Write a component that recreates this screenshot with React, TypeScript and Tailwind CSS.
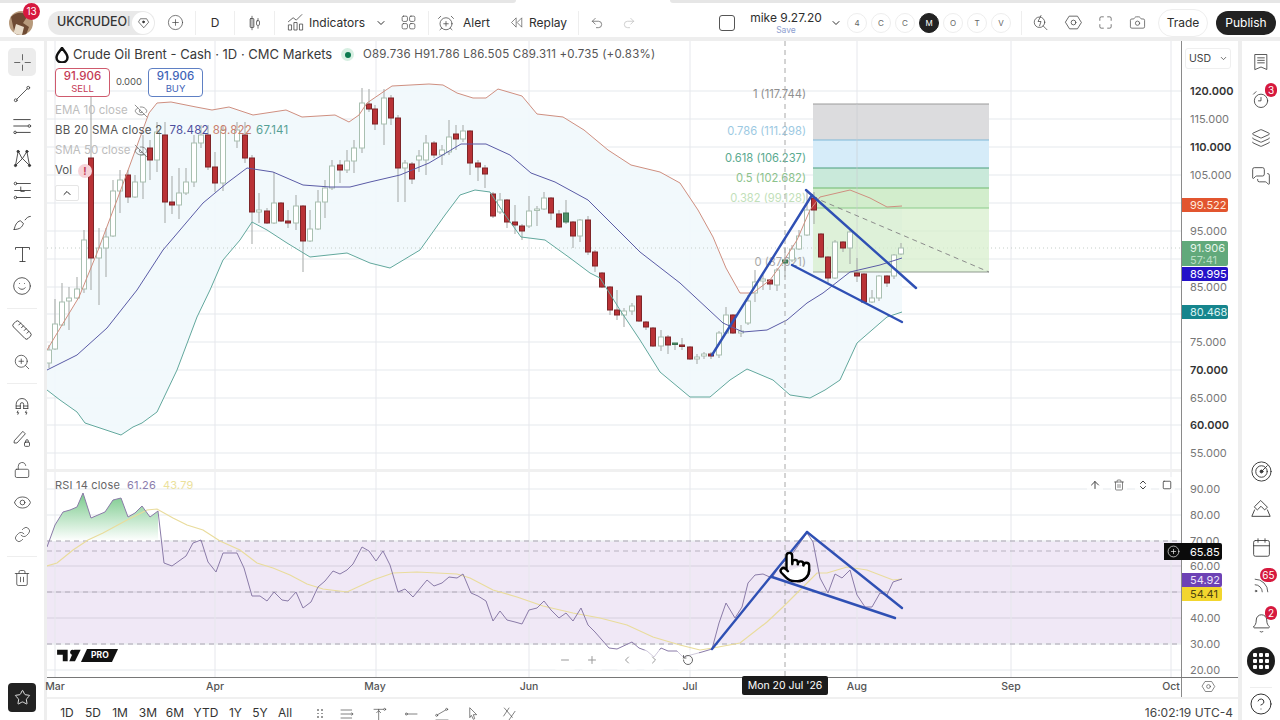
import type { ReactNode } from "react"
import {
  AlarmClockPlus, Bell, Calendar, Camera, ChevronDown, ChevronLeft, ChevronRight, ChevronUp, ChevronsUpDown, CircleHelp, CirclePlus, EyeOff,
  Eye, Layers, Link, LockOpen, MessagesSquare, Minus, Plus, Pointer, Redo2, RotateCcw, Rss, Ruler, Smile, Star, Trash2, Undo2, ArrowUp, Square, ZoomIn,
} from "lucide-react"

type Pt = [number, number]
const line = (pts: Pt[]) => "M" + pts.map((p) => p.join(",")).join("L")

const upper: Pt[] = [[47,350],[62,325],[79,297],[97,253],[117,200],[127,173],[138,143],[149,113],[157,103],[171,102],[196,107],[212,110],[229,107],[253,115],[286,110],[302,117],[335,115],[349,122],[359,115],[367,103],[386,90],[392,86],[429,84],[443,85],[457,93],[473,98],[486,98],[498,89],[522,96],[537,114],[563,117],[584,130],[608,150],[631,165],[660,172],[680,183],[698,210],[713,237],[726,268],[740,293],[753,293],[770,280],[783,262],[797,240],[810,210],[820,197],[850,190],[870,198],[887,207],[902,206]]
const mid: Pt[] = [[47,370],[77,355],[107,328],[137,290],[163,250],[203,203],[227,183],[247,168],[273,172],[303,185],[330,187],[350,187],[370,182],[400,175],[429,163],[461,144],[486,144],[510,155],[531,173],[555,182],[588,200],[610,222],[640,252],[680,283],[723,323],[743,332],[767,330],[787,320],[807,303],[823,293],[850,272],[880,265],[902,258]]
const lower: Pt[] = [[47,390],[60,400],[77,412],[85,423],[103,429],[121,435],[133,427],[142,423],[157,412],[177,370],[197,317],[210,290],[223,260],[240,240],[252,222],[267,230],[287,243],[310,257],[347,253],[370,263],[390,268],[420,250],[445,215],[460,195],[475,190],[490,192],[503,212],[521,237],[545,240],[570,258],[590,273],[600,278],[620,310],[640,340],[660,372],[690,397],[710,397],[730,380],[747,369],[773,380],[790,395],[810,398],[825,390],[840,380],[857,343],[887,317],[902,312]]

const rsi: Pt[] = [[47,547],[55,525],[63,512],[70,510],[77,507],[83,493],[91,518],[105,512],[113,500],[121,498],[128,517],[135,513],[142,506],[150,517],[158,511],[164,563],[172,566],[186,556],[193,543],[201,540],[208,562],[216,572],[223,553],[237,553],[244,568],[252,596],[260,596],[267,601],[274,592],[282,600],[288,601],[296,592],[303,608],[311,602],[318,587],[325,581],[333,571],[340,574],[347,570],[353,564],[362,547],[369,551],[376,561],[383,551],[390,565],[398,592],[405,589],[413,597],[427,580],[434,586],[442,583],[449,577],[457,578],[463,574],[471,593],[478,596],[486,601],[493,621],[500,611],[507,620],[515,622],[522,624],[529,610],[537,608],[544,601],[551,610],[559,618],[566,613],[573,621],[581,608],[588,625],[595,632],[609,648],[617,649],[632,642],[639,648],[647,651],[654,657],[661,648],[668,651],[677,651],[683,657],[702,652],[712,649],[719,623],[726,603],[735,618],[742,607],[748,583],[755,575],[763,574],[772,578],[780,565],[790,557],[807,533],[813,542],[820,578],[828,593],[835,574],[842,578],[850,570],[857,595],[865,607],[872,607],[880,593],[887,595],[893,582],[902,579]]
const rsiMa: Pt[] = [[47,566],[57,563],[73,550],[88,540],[103,533],[127,520],[147,510],[157,509],[173,518],[187,525],[203,530],[220,541],[240,550],[257,563],[273,568],[290,575],[307,584],[323,589],[347,592],[373,580],[393,573],[417,572],[457,574],[470,578],[493,590],[517,597],[543,606],[573,613],[600,618],[627,625],[653,637],[680,645],[700,650],[713,648],[740,643],[767,622],[783,607],[800,590],[817,573],[827,573],[847,567],[867,570],[893,580],[902,579]]
const rsiAbove: Pt[] = rsi.slice(0, 15)

// x, body top, body bottom, wick high, wick low, kind
type Candle = [number, number, number, number, number, "h" | "r" | "g"]
const candles: Candle[] = [
  [49,350,363,345,368,"h"],[55,324,349,299,350,"h"],[62,302,325,283,326,"h"],[69,298,301,287,330,"h"],[77,289,298,277,299,"h"],[84,240,289,230,293,"h"],[91,158,258,95,290,"r"],[99,248,258,228,305,"h"],[106,237,248,228,277,"h"],[113,191,236,180,237,"h"],[120,180,191,170,213,"h"],[128,175,197,170,203,"r"],[135,182,197,175,198,"h"],[143,155,182,135,199,"h"],[150,148,160,140,180,"r"],[157,132,160,122,172,"h"],[165,135,202,122,223,"r"],[172,202,205,176,214,"r"],[179,193,205,168,219,"h"],[186,182,193,168,195,"h"],[194,143,182,135,187,"h"],[201,135,143,125,148,"h"],[208,135,167,125,170,"r"],[215,167,183,152,192,"r"],[223,130,183,125,191,"h"],[237,130,141,122,148,"h"],[245,135,158,122,163,"r"],[252,158,212,155,244,"r"],[259,210,212,193,223,"h"],[267,211,223,208,224,"r"],[274,203,223,172,224,"h"],[281,203,221,202,222,"r"],[288,221,223,210,228,"r"],[296,206,223,195,230,"h"],[303,206,241,205,272,"r"],[310,229,241,210,242,"h"],[318,202,229,190,230,"h"],[325,188,202,180,218,"h"],[332,166,188,160,190,"h"],[340,165,170,160,183,"r"],[347,161,170,150,173,"h"],[354,148,161,140,173,"h"],[362,103,148,88,153,"h"],[369,104,109,89,112,"r"],[375,109,124,105,130,"r"],[384,98,124,89,145,"h"],[391,98,118,95,125,"r"],[398,118,168,115,202,"r"],[405,163,168,160,202,"h"],[412,164,179,162,184,"r"],[419,156,160,150,172,"h"],[426,143,160,135,175,"h"],[434,143,155,141,158,"r"],[442,150,155,145,165,"h"],[449,137,152,120,155,"h"],[456,134,139,125,150,"r"],[463,131,139,125,142,"h"],[470,131,163,130,175,"r"],[478,163,167,160,181,"r"],[485,168,174,165,188,"r"],
  [493,194,216,192,218,"r"],[500,200,212,193,214,"h"],[507,200,222,199,228,"r"],[515,222,225,205,234,"r"],[522,226,231,224,240,"r"],[529,211,226,196,228,"h"],[537,209,210,206,226,"h"],[544,198,209,192,210,"h"],[551,198,213,197,220,"r"],[559,214,227,210,228,"r"],[566,213,222,200,224,"g"],[573,222,236,221,248,"r"],[580,220,236,219,242,"h"],[588,220,252,216,255,"r"],[595,252,266,250,272,"r"],[602,273,287,272,288,"r"],[610,287,310,286,315,"r"],[617,310,315,290,320,"r"],[624,311,315,308,327,"h"],[632,306,311,303,315,"h"],[639,296,321,295,322,"r"],[646,322,327,321,330,"r"],[653,328,346,327,347,"r"],[661,337,346,330,351,"h"],[668,337,345,335,354,"r"],[675,343,344,343,350,"g"],[682,345,346,338,350,"r"],[690,347,359,346,360,"r"],[697,357,359,354,364,"h"],[704,354,356,352,359,"h"],[711,354,356,352,359,"r"],
  [719,333,355,331,358,"h"],[726,315,333,307,334,"h"],[733,315,333,314,334,"r"],[741,331,333,325,337,"h"],[748,301,323,295,325,"h"],[755,282,293,270,302,"h"],[763,279,281,275,290,"h"],[770,280,284,279,290,"r"],[777,270,285,268,291,"h"],[785,260,263,247,277,"g"],[792,249,260,245,262,"h"],[799,236,249,230,250,"h"],[807,210,235,190,236,"h"],[814,198,210,192,224,"r"],[821,234,257,233,258,"r"],[828,257,278,256,283,"r"],[835,242,278,240,279,"h"],[843,242,248,241,252,"r"],[850,232,248,230,264,"h"],[857,273,276,258,282,"r"],[864,274,302,273,303,"r"],[872,298,302,290,303,"h"],[879,276,298,275,301,"h"],[887,276,283,275,287,"r"],[894,255,276,254,279,"h"],[901,248,254,243,255,"h"],
]

const vGrid = [55, 215, 376, 529, 690, 857, 1011, 1171]
const hGrid = [91, 119, 147, 175, 203, 231, 259, 287, 314, 342, 370, 398, 425, 453, 489, 515, 541, 566, 592, 618, 644, 670]

const priceTicks: [string, number, boolean][] = [["120.000",91,true],["115.000",119,false],["110.000",147,true],["105.000",175,false],["95.000",231,false],["85.000",287,false],["75.000",342,false],["70.000",370,true],["65.000",398,false],["60.000",425,true],["55.000",453,false],["90.00",489,false],["80.00",515,false],["70.00",541,false],["60.00",566,false],["40.00",618,false],["30.00",644,false],["20.00",670,false]]
const months: [string, number][] = [["Mar",55],["Apr",215],["May",375],["Jun",529],["Jul",690],["Aug",857],["Sep",1011],["Oct",1171]]
const ranges: [string, string][] = [["1D","w-[26px]"],["5D","w-[26px]"],["1M","w-[28px]"],["3M","w-[28px]"],["6M","w-[26px]"],["YTD","w-[36px]"],["1Y","w-[23px]"],["5Y","w-[26px]"],["All","w-[24px]"]]
const fibLabels: [string, number, string][] = [["1 (117.744)",98,"#8f8f8f"],["0.786 (111.298)",135,"#9cc9e2"],["0.618 (106.237)",162,"#5aa98f"],["0.5 (102.682)",182,"#8cc28c"],["0.382 (99.128)",202,"#c2dfba"],["0 (87.621)",266,"#a8a8a8"]]

function Ico({ size = 22, children, className = "" }: { size?: number; children: ReactNode; className?: string }) {
  return (
    <svg width={size} height={size} viewBox="0 0 24 24" fill="none" stroke="currentColor" strokeWidth={1} strokeLinecap="round" strokeLinejoin="round" className={className}>
      {children}
    </svg>
  )
}

function ToolCell({ children }: { children: ReactNode }) {
  return <div className="h-[32px] w-[44px] flex items-center justify-center text-[#3a3a3a]">{children}</div>
}

function SideCell({ children, badge, wide }: { children: ReactNode; badge?: string; wide?: boolean }) {
  return (
    <div className="relative h-[38px] w-[38px] flex items-center justify-center text-[#3a3a3a]">
      {children}
      {badge && (
        <span className={`absolute top-[2px] right-[3px] h-[14px] rounded-full bg-[#d6193e] text-white text-[10px] leading-[14px] text-center ${wide ? "w-[17px]" : "w-[12px]"}`}>
          {badge}
        </span>
      )}
    </div>
  )
}

function Divider() {
  return <div className="w-px h-[24px] bg-[#eeeeee] shrink-0" />
}

function TopBar() {
  const letters = ["4", "C", "C", "M", "O", "T", "V"]
  return (
    <div className="h-[38px] flex items-center pt-[1px] text-[#2e2e2e] text-[12px]">
      <div className="relative ml-[9px] w-[24px] h-[24px] shrink-0">
        <svg width="24" height="24" viewBox="0 0 24 24" className="rounded-full">
          <rect width="24" height="24" fill="#b79a7c" />
          <path d="M2 6c6-6 14-5 16 0l-4 6 6 4-3 8H6z" fill="#6e4a33" />
          <path d="M7 13l8 3-2 8H4z" fill="#e8dccb" />
        </svg>
        <span className="absolute -top-[8px] left-[14px] w-[17px] h-[17px] rounded-full bg-[#d6193e] text-white text-[10px] leading-[17px] text-center">13</span>
      </div>
      <div className="ml-[15px] w-[107px] h-[24px] rounded-full bg-[#e9e9e9] flex items-center shrink-0 relative">
        <span className="pl-[9px] font-medium text-[12.5px] text-[#333] whitespace-nowrap">UKCRUDEO<span className="text-[#aaa]">I</span></span>
        <span className="absolute right-[1px] top-[1px] w-[22px] h-[22px] rounded-full bg-white flex items-center justify-center">
          <Ico size={15}>
            <path d="M12 20L4 11l3-5h10l3 5z" />
            <circle cx="12" cy="11" r="1.6" fill="currentColor" />
          </Ico>
        </span>
      </div>
      <div className="w-[40px] flex justify-center shrink-0 text-[#444]"><CirclePlus size={17} strokeWidth={1} /></div>
      <Divider />
      <div className="w-[38px] text-center shrink-0 text-[12px]">D</div>
      <Divider />
      <div className="w-[39px] flex justify-center shrink-0 text-[#444]">
        <Ico size={18}>
          <path d="M8 3v18M16 6v13" />
          <rect x="5.5" y="6" width="5" height="12" rx="1" fill="#bbb" />
          <rect x="14" y="9" width="4" height="6" rx="1" fill="#fff" />
        </Ico>
      </div>
      <Divider />
      <div className="ml-[6px] w-[28px] flex justify-center shrink-0 text-[#444]">
        <Ico size={19}>
          <path d="M3 21v-6h4v6zM10 21v-9h4v9zM17 21v-7h4v7z" />
          <path d="M3 11l6-5 4 3 7-7" />
        </Ico>
      </div>
      <div className="w-[60px] shrink-0">Indicators</div>
      <div className="w-[24px] flex justify-center shrink-0"><ChevronDown size={12} /></div>
      <div className="w-[30px] flex justify-center shrink-0 text-[#444]">
        <Ico size={17}>
          <rect x="3" y="3" width="7.5" height="7.5" rx="2" />
          <rect x="13.5" y="3" width="7.5" height="7.5" rx="2" />
          <rect x="3" y="13.5" width="7.5" height="7.5" rx="2" />
          <rect x="13.5" y="13.5" width="7.5" height="7.5" rx="2" />
        </Ico>
      </div>
      <div className="ml-[5px]"><Divider /></div>
      <div className="w-[34px] flex justify-center shrink-0 text-[#444]"><AlarmClockPlus size={18} strokeWidth={1} /></div>
      <div className="w-[40px] shrink-0">Alert</div>
      <div className="w-[26px] flex justify-center shrink-0 text-[#444]">
        <Ico size={15}>
          <path d="M11 5l-7 7 7 7zM20 5l-7 7 7 7z" />
        </Ico>
      </div>
      <div className="w-[49px] shrink-0">Replay</div>
      <Divider />
      <div className="ml-[4px] w-[28px] flex justify-center shrink-0 text-[#555]"><Undo2 size={14} strokeWidth={1.2} /></div>
      <div className="ml-[4px] w-[28px] flex justify-center shrink-0 text-[#bbb]"><Redo2 size={14} strokeWidth={1.2} /></div>
      <div className="w-[75px] shrink-0" />
      <div className="w-[18px] flex justify-center shrink-0">
        <div className="w-[16px] h-[16px] rounded-[3px] border border-[#555]" />
      </div>
      <div className="ml-[12px] w-[76px] shrink-0 flex flex-col items-center">
        <span className="text-[12px] leading-[14px] mt-[1px] whitespace-nowrap">mike 9.27.20</span>
        <span className="text-[8.5px] leading-[10px] text-[#8ea0d0]">Save</span>
      </div>
      <div className="w-[23px] flex justify-center shrink-0"><ChevronDown size={12} /></div>
      <div className="flex gap-[4px] shrink-0">
        {letters.map((l, i) => (
          <div
            key={i}
            className={`w-[20px] h-[20px] rounded-full flex items-center justify-center text-[8px] border ${l === "M" ? "bg-[#222] text-white border-[#222]" : "border-[#eeeeee] text-[#666]"}`}
          >
            {l}
          </div>
        ))}
      </div>
      <div className="ml-[10px]"><Divider /></div>
      <div className="ml-[3px] w-[32px] flex justify-center shrink-0 text-[#444]">
        <Ico size={18}>
          <circle cx="10" cy="11" r="7" />
          <path d="M15 16l5 5" />
          <path d="M12 2l-4 8h4l-2 6" />
        </Ico>
      </div>
      <div className="w-[32px] flex justify-center shrink-0 text-[#444]">
        <Ico size={19}>
          <path d="M7 4h10l5 8-5 8H7l-5-8z" />
          <circle cx="12" cy="12" r="3" />
        </Ico>
      </div>
      <div className="w-[32px] flex justify-center shrink-0 text-[#444]">
        <Ico size={17}>
          <path d="M4 9V6a2 2 0 0 1 2-2h3M15 4h3a2 2 0 0 1 2 2v3M20 15v3a2 2 0 0 1-2 2h-3M9 20H6a2 2 0 0 1-2-2v-3" />
        </Ico>
      </div>
      <div className="w-[32px] flex justify-center shrink-0 text-[#444]"><Camera size={17} strokeWidth={1} /></div>
      <div className="ml-[5px] w-[50px] h-[28px] rounded-full border border-[#eeeeee] flex items-center justify-center shrink-0">Trade</div>
      <div className="ml-[8px] w-[60px] h-[24px] rounded-full bg-[#222] text-white flex items-center justify-center shrink-0">Publish</div>
    </div>
  )
}

function LeftBar() {
  return (
    <div className="w-[47px] shrink-0 border-r-[3px] border-[#eeeeee] flex flex-col pt-[5px] bg-white">
      <div className="h-[32px] w-[44px] flex items-center justify-center text-[#555]">
        <div className="w-[28px] h-[28px] rounded-[5px] bg-[#ececec] flex items-center justify-center">
          <Ico size={21}><path d="M12 3v6M12 15v6M3 12h6M15 12h6" /></Ico>
        </div>
      </div>
      <ToolCell><Ico size={20}><circle cx="4.5" cy="19.5" r="1.7" /><circle cx="19.5" cy="4.5" r="1.7" /><path d="M6 18L18 6" /></Ico></ToolCell>
      <ToolCell><Ico size={22}><path d="M3 5h18M3 12h15M7 19h14" /><circle cx="20" cy="12" r="1.4" /><circle cx="4.5" cy="19" r="1.4" /></Ico></ToolCell>
      <ToolCell><Ico size={21}><path d="M7 4L4 20l8-8 8 8-3-16-5 8z" /><circle cx="7" cy="4" r="1.3" fill="currentColor" /><circle cx="17" cy="4" r="1.3" fill="currentColor" /><circle cx="4" cy="20" r="1.3" fill="currentColor" /><circle cx="20" cy="20" r="1.3" fill="currentColor" /></Ico></ToolCell>
      <ToolCell><Ico size={21}><path d="M6 4h15M6 20h15M3 12h18M10 8v5h4" /><circle cx="4" cy="4" r="1.5" /><circle cx="4" cy="20" r="1.5" /></Ico></ToolCell>
      <ToolCell><Ico size={21}><path d="M2.5 20c1-5 3-9 7-10l3.5 3c-1 4-4 7-10.5 7z" /><path d="M15 9c1.5-2 3.5-4 6-4" /></Ico></ToolCell>
      <ToolCell><Ico size={21}><path d="M4 6V4h16v2M12 4v16M9 20h6" /></Ico></ToolCell>
      <ToolCell><Smile size={20} strokeWidth={1} /></ToolCell>
      <div className="mt-[6px] mb-[5px] mx-auto w-[30px] h-px bg-[#eeeeee]" />
      <ToolCell><Ruler size={22} strokeWidth={1} /></ToolCell>
      <ToolCell><ZoomIn size={18} strokeWidth={1} /></ToolCell>
      <div className="mt-[5px] mb-[6px] mx-auto w-[30px] h-px bg-[#eeeeee]" />
      <ToolCell><Ico size={20}><path d="M5 15V10a7 7 0 0 1 14 0v5M10 15V10a2 2 0 0 1 4 0v5M5 12h5M14 12h5M5 15h5M14 15h5M7 18l-1 2 2 0-1 2M17 18l-1 2 2 0-1 2" /></Ico></ToolCell>
      <ToolCell><Ico size={20}><path d="M3 15L13 4l3 3L6 18l-3 0z" /><rect x="15" y="17" width="6" height="5" rx="1" /><path d="M16.5 17v-1.5a1.5 1.5 0 0 1 3 0V17" /></Ico></ToolCell>
      <ToolCell><LockOpen size={18} strokeWidth={1} /></ToolCell>
      <ToolCell><Eye size={19} strokeWidth={1} /></ToolCell>
      <ToolCell><Link size={17} strokeWidth={1} /></ToolCell>
      <div className="mt-[6px] mb-[5px] mx-auto w-[30px] h-px bg-[#eeeeee]" />
      <ToolCell><Trash2 size={18} strokeWidth={1} /></ToolCell>
      <div className="mt-auto mb-[8px] ml-[8px] w-[28px] h-[29px] rounded-[4px] bg-[#222] flex items-center justify-center text-white">
        <Star size={17} strokeWidth={1.2} />
      </div>
    </div>
  )
}

function RightBar() {
  return (
    <div className="w-[42px] shrink-0 border-l-[4px] border-[#eeeeee] flex flex-col pt-[2px] bg-white">
      <SideCell><Ico size={20}><path d="M5 3h14v18l-7-3-7 3z" /><path d="M8 7h8M8 10h8M8 13h8" /></Ico></SideCell>
      <SideCell badge="3"><Ico size={20}><circle cx="12" cy="13" r="8" /><path d="M12 9v4H9M3 5l3-3" /></Ico></SideCell>
      <SideCell><Layers size={20} strokeWidth={1} /></SideCell>
      <SideCell><MessagesSquare size={20} strokeWidth={1} /></SideCell>
      <div className="mt-auto" />
      <SideCell><Ico size={23}><circle cx="12" cy="12" r="10" /><circle cx="12" cy="12" r="6" /><circle cx="12" cy="12" r="1.5" fill="currentColor" /><path d="M12 12l6-6" /></Ico></SideCell>
      <SideCell><Ico size={22}><path d="M12 3l7 7-3 3-4-4-4 4-3-3zM5 13l-3 7h20l-3-7" /></Ico></SideCell>
      <SideCell><Calendar size={21} strokeWidth={1} /></SideCell>
      <SideCell badge="65" wide><Rss size={19} strokeWidth={1} /></SideCell>
      <SideCell badge="2"><Bell size={21} strokeWidth={1} /></SideCell>
      <SideCell>
        <div className="w-[28px] h-[28px] rounded-full bg-[#1c1c1c] grid grid-cols-3 gap-[2px] p-[6px]">
          {Array.from({ length: 9 }).map((_, i) => (
            <span key={i} className="bg-white rounded-[1px]" />
          ))}
        </div>
      </SideCell>
      <div className="mt-[7px] mx-auto w-[22px] h-px bg-[#eeeeee]" />
      <div className="h-[32px] w-[38px] flex items-center justify-center text-[#333]"><CircleHelp size={24} strokeWidth={1} /></div>
    </div>
  )
}

function ChartSvg() {
  const band = line(upper) + "L" + [...lower].reverse().map((p) => p.join(",")).join("L") + "Z"
  return (
    <svg viewBox="47 41 1134 636" width="1134" height="636" className="absolute inset-0">
      <defs>
        <linearGradient id="rsiGreen" x1="0" y1="493" x2="0" y2="541" gradientUnits="userSpaceOnUse">
          <stop offset="0" stopColor="#78c98a" />
          <stop offset="1" stopColor="#ffffff" />
        </linearGradient>
        <clipPath id="aboveBand"><rect x="47" y="470" width="120" height="71" /></clipPath>
      </defs>
      <rect x="47" y="541" width="1134" height="103" fill="#f0e8f6" />
      {hGrid.map((y) => <line key={y} x1="47" x2="1181" y1={y} y2={y} stroke={y > 541 && y < 644 ? "#dfd8e6" : "#eef0f3"} strokeWidth={1.5} />)}
      {vGrid.map((x) => <line key={x} x1={x} x2={x} y1="41" y2="677" stroke="#e6e7ec" />)}
      <rect x="47" y="469" width="1134" height="3" fill="#f0f0f0" />
      <path d={band} fill="#f1f9fc" fillOpacity="0.92" />
      <line x1="47" x2="1181" y1="248" y2="248" stroke="#c4cdc8" strokeDasharray="1 3" />

      <rect x="813" y="104" width="176" height="36" fill="#dcdcde" />
      <rect x="813" y="140" width="176" height="28" fill="#d6ecf9" />
      <rect x="813" y="168" width="176" height="20" fill="#c9e9da" />
      <rect x="813" y="188" width="176" height="20" fill="#d2edcc" />
      <rect x="813" y="208" width="176" height="64" fill="#d6eecb" fillOpacity="0.7" />
      <line x1="813" x2="989" y1="104" y2="104" stroke="#9a9a9a" />
      <line x1="813" x2="989" y1="140" y2="140" stroke="#7fb8d8" />
      <line x1="813" x2="989" y1="168" y2="168" stroke="#4a9e7a" />
      <line x1="813" x2="989" y1="188" y2="188" stroke="#6eb96e" />
      <line x1="813" x2="989" y1="208" y2="208" stroke="#8ccb8c" />
      <line x1="813" x2="989" y1="272" y2="272" stroke="#8f9a8f" />
      <line x1="857" x2="857" y1="104" y2="272" stroke="#c9ccd0" strokeOpacity="0.6" />
      <line x1="813" y1="197" x2="989" y2="272" stroke="#8c8c8c" strokeDasharray="5 4" />
      {fibLabels.map(([t, y, c]) => (
        <text key={t} x="806" y={y} textAnchor="end" fontSize="11.2" fill={c} fontFamily="Inter, sans-serif">{t}</text>
      ))}

      {candles.map(([x, top, bot, hi, lo, k], i) => (
        <g key={i}>
          <line x1={x} x2={x} y1={hi} y2={lo} stroke="#a3a7a5" />
          <rect
            x={x - 2.5}
            y={top}
            width="5"
            height={Math.max(bot - top, 1.5)}
            fill={k === "r" ? "#b93236" : k === "g" ? "#4f8f68" : "#ffffff"}
            stroke={k === "r" ? "#7f2528" : k === "g" ? "#3b7453" : "#a9c0b1"}
          />
        </g>
      ))}
      <path d={line(upper)} fill="none" stroke="#cf8f80" />
      <path d={line(mid)} fill="none" stroke="#5a5ba6" />
      <path d={line(lower)} fill="none" stroke="#62a89d" />

      <path d={line(rsiAbove) + "L158,541L47,541Z"} fill="url(#rsiGreen)" clipPath="url(#aboveBand)" />
      <line x1="47" x2="1181" y1="541" y2="541" stroke="#a8a2b0" strokeDasharray="5 4" />
      <line x1="47" x2="1181" y1="592" y2="592" stroke="#b0aab8" strokeDasharray="5 4" />
      <line x1="47" x2="1181" y1="644" y2="644" stroke="#a8a2b0" strokeDasharray="5 4" />
      <line x1="47" x2="1163" y1="551" y2="551" stroke="#b8b2c0" strokeDasharray="5 4" />
      <path d={line(rsiMa)} fill="none" stroke="#e9dc9c" strokeWidth={1.2} />
      <path d={line(rsi)} fill="none" stroke="#8a7ba8" />
      <line x1="785" x2="785" y1="41" y2="677" stroke="#a8a8a8" strokeDasharray="5 4" />

      <g stroke="#2f50b4" strokeWidth={2.4} strokeLinecap="round">
        <line x1="712" y1="355" x2="812" y2="195" />
        <line x1="806" y1="190" x2="916" y2="288" />
        <line x1="792" y1="265" x2="902" y2="322" />
        <line x1="712" y1="649" x2="807" y2="532" />
        <line x1="807" y1="532" x2="902" y2="608" />
        <line x1="772" y1="577" x2="895" y2="618" />
      </g>
    </svg>
  )
}

function Legend() {
  return (
    <>
      <div className="absolute left-[8px] top-[4px] flex items-center whitespace-nowrap">
        <svg width="14" height="16" viewBox="0 0 14 16" className="mr-[4px]">
          <path d="M7 1C5 4 1.500 7 1.500 10.500a5.500 5 0 0 0 11 0C12.500 7 9 4 7 1z" fill="none" stroke="#111" strokeWidth="2.500" />
        </svg>
        <span className="text-[13px] text-[#3a3a3a] w-[268px]">Crude Oil Brent - Cash · 1D · CMC Markets</span>
        <span className="w-[13px] h-[13px] rounded-full bg-[#d7efe2] flex items-center justify-center mr-[9px]">
          <span className="w-[6px] h-[6px] rounded-full bg-[#0c7a4f]" />
        </span>
        <span className="text-[11.5px] text-[#555] tracking-[0.2px]">O89.736 H91.786 L86.505 C89.311 +0.735 (+0.83%)</span>
      </div>

      <div className="absolute left-[8px] top-[27px] flex items-center">
        <div className="w-[55px] h-[29px] rounded-[4px] border border-[#cf5a6d] bg-white flex flex-col items-center justify-center text-[#c43a55] leading-none">
          <span className="text-[11.5px] font-medium leading-[13px]">91.906</span>
          <span className="text-[9.5px] leading-[12px]">SELL</span>
        </div>
        <span className="w-[38px] text-center text-[9.5px] text-[#555]">0.000</span>
        <div className="w-[55px] h-[29px] rounded-[4px] border border-[#5f80c4] bg-white flex flex-col items-center justify-center text-[#3f64b8] leading-none">
          <span className="text-[11.5px] font-medium leading-[13px]">91.906</span>
          <span className="text-[9.5px] leading-[12px]">BUY</span>
        </div>
      </div>

      <div className="absolute left-[8px] top-[62px] flex items-center h-[16px] text-[11.5px] text-[#bdbdbd] whitespace-nowrap">
        <span className="w-[79px]">EMA 10 close</span>
        <EyeOff size={14} strokeWidth={1.2} className="text-[#666]" />
      </div>
      <div className="absolute left-[8px] top-[82px] flex items-center gap-[4px] h-[16px] text-[11.5px] tracking-[0.2px] whitespace-nowrap">
        <span className="text-[#555] mr-[3px]">BB 20 SMA close 2</span>
        <span className="text-[#4e4f9e]">78.482</span>
        <span className="text-[#c9806e]">89.822</span>
        <span className="text-[#56a095]">67.141</span>
      </div>
      <div className="absolute left-[8px] top-[102px] flex items-center h-[16px] text-[11.5px] text-[#bdbdbd] whitespace-nowrap">
        <span className="w-[79px]">SMA 50 close</span>
        <EyeOff size={14} strokeWidth={1.2} className="text-[#666]" />
      </div>
      <div className="absolute left-[8px] top-[122px] flex items-center h-[16px] text-[11.5px] text-[#555]">
        <span className="w-[23px]">Vol</span>
        <span className="w-[14px] h-[14px] rounded-full bg-[#f6d3d8] text-[#c43a55] text-[10px] font-bold flex items-center justify-center">!</span>
      </div>
      <div className="absolute left-[8px] top-[144px] w-[24px] h-[16px] rounded-[2px] border border-[#e6e6e6] bg-white flex items-center justify-center">
        <ChevronUp size={12} className="text-[#222]" />
      </div>

      <div className="absolute left-[8px] top-[436px] flex gap-[7px] text-[11px] tracking-[0.2px] whitespace-nowrap">
        <span className="text-[#666]">RSI 14 close</span>
        <span className="text-[#8a7cac]">61.26</span>
        <span className="text-[#ebe19c]">43.79</span>
      </div>

      <div className="absolute right-[6px] top-[436px] flex gap-[8px] text-[#444]">
        <div className="w-[16px] h-[16px] flex items-center justify-center bg-white/80"><ArrowUp size={12} /></div>
        <div className="w-[16px] h-[16px] flex items-center justify-center bg-white/80"><Trash2 size={12} strokeWidth={1.3} /></div>
        <div className="w-[16px] h-[16px] flex items-center justify-center bg-white/80"><ChevronsUpDown size={12} className="rotate-180" /></div>
        <div className="w-[16px] h-[16px] flex items-center justify-center bg-white/80"><Square size={10} /></div>
      </div>

      <div className="absolute left-[10px] top-[608px] flex items-center">
        <svg width="27" height="13" viewBox="0 0 33 16">
          <path d="M0 1h13v14H7V7H0zM22 15h-7l6-14h8zM19 1a3 3 0 1 1-.01 0z" fill="#111" />
        </svg>
        <div className="w-[31px] h-[13px] bg-[#111] -skew-x-[25deg] flex items-center justify-center">
          <span className="skew-x-[25deg] text-white text-[8.5px] font-bold leading-none">PRO</span>
        </div>
      </div>

      <div className="absolute left-[507px] top-[609px] flex text-[#999]">
        <div className="w-[22px] h-[20px] rounded-[3px] bg-white/60 flex items-center justify-center mr-[5px]"><Minus size={12} /></div>
        <div className="w-[22px] h-[20px] rounded-[3px] bg-white/60 flex items-center justify-center mr-[13px]"><Plus size={12} /></div>
        <div className="w-[22px] h-[20px] rounded-[3px] bg-white/60 flex items-center justify-center mr-[5px]"><ChevronLeft size={12} /></div>
        <div className="w-[22px] h-[20px] rounded-[3px] bg-white/60 flex items-center justify-center mr-[12px]"><ChevronRight size={12} /></div>
        <div className="w-[22px] h-[20px] rounded-[3px] bg-white/60 flex items-center justify-center text-[#666]"><RotateCcw size={12} /></div>
      </div>

      <div className="absolute left-[731px] top-[509px]">
        <Pointer size={34} strokeWidth={1.7} fill="#ffffff" className="text-black" />
      </div>
    </>
  )
}

function PriceAxis() {
  return (
    <div className="relative w-[57px] h-[636px] border-l border-[#8a8a8a] shrink-0 text-[11px]">
      <div className="absolute left-[3px] top-[7px] w-[46px] h-[21px] rounded-[3px] border border-[#efefef] flex items-center justify-between pl-[3px] pr-[2px] text-[10.5px] text-[#444]">
        USD
        <ChevronDown size={9} />
      </div>
      {priceTicks.map(([t, y, bold]) => (
        <div key={t} className={`absolute left-[8px] h-[14px] leading-[14px] ${bold ? "font-semibold text-[#333]" : "text-[#777]"}`} style={{ top: y - 48 }}>
          {t}
        </div>
      ))}
      <div className="absolute left-0 top-[157px] w-[46px] h-[14px] rounded-r-[2px] bg-[#e2552f] text-[#ffe9dc] pl-[8px] leading-[14px]">99.522</div>
      <div className="absolute left-0 top-[200px] w-[46px] h-[25px] rounded-r-[2px] bg-[#62a97b] text-[#e6f5ea] pl-[8px] leading-[12px] pt-px">
        91.906
        <div className="text-[#b9dfc4]">57:41</div>
      </div>
      <div className="absolute left-0 top-[226px] w-[46px] h-[14px] rounded-r-[2px] bg-[#2411c9] text-white pl-[8px] leading-[14px]">89.995</div>
      <div className="absolute left-0 top-[264px] w-[46px] h-[14px] rounded-r-[2px] bg-[#16858d] text-[#d8f2f2] pl-[8px] leading-[14px]">80.468</div>
      <div className="absolute -left-[18px] top-[502px] w-[58px] h-[17px] rounded-r-[2px] bg-[#0b0b0b] text-white flex items-center leading-[14px]">
        <span className="w-[18px] flex justify-center"><CirclePlus size={13} strokeWidth={1.2} /></span>
        <span className="pl-[8px]">65.85</span>
      </div>
      <div className="absolute left-0 top-[532px] w-[40px] h-[14px] rounded-r-[2px] bg-[#6d42b5] text-[#ece2fb] pl-[8px] leading-[14px]">54.92</div>
      <div className="absolute left-0 top-[546px] w-[40px] h-[14px] rounded-r-[2px] bg-[#f2d62e] text-[#4b4210] pl-[8px] leading-[14px]">54.41</div>
    </div>
  )
}

function TimeAxis() {
  return (
    <div className="relative h-[20px] border-t border-[#777] text-[10.5px] font-medium text-[#555]">
      {months.map(([m, x]) => (
        <span key={m} className="absolute top-[2px] -translate-x-1/2 leading-[14px]" style={{ left: x - 47 }}>{m}</span>
      ))}
      <div className="absolute left-[695px] -top-[2px] w-[86px] h-[19px] rounded-[2px] bg-[#1b1b1b] text-white text-[10.5px] font-normal flex items-center justify-center whitespace-nowrap">Mon 20 Jul '26</div>
      <div className="absolute left-[1134px] top-0 bottom-0 w-px bg-[#8a8a8a]" />
      <div className="absolute left-[1154px] top-[1px] text-[#444]">
        <Ico size={15}>
          <path d="M7 4h10l5 8-5 8H7l-5-8z" />
          <circle cx="12" cy="12" r="3" />
        </Ico>
      </div>
    </div>
  )
}

function BottomBar() {
  return (
    <div className="h-[23px] border-t-2 border-[#f0f0f0] flex items-start pt-[7px] pl-[7px] text-[12px] text-[#333] overflow-hidden">
      {ranges.map(([r, w]) => (
        <span key={r} className={`${w} text-center leading-[13px] shrink-0`}>{r}</span>
      ))}
      <span className="w-[20px] shrink-0" />
      <div className="w-[6px] shrink-0 grid grid-cols-2 gap-[2px] mr-[4px] pt-[3px]">
        {Array.from({ length: 6 }).map((_, i) => <span key={i} className="w-[1.5px] h-[1.5px] bg-[#999]" />)}
      </div>
      <div className="w-[40px] flex justify-center shrink-0 text-[#444]"><Ico size={16}><path d="M3 6h16M3 12h13M3 18h16" /><circle cx="19" cy="12" r="1.5" /></Ico></div>
      <div className="w-[26px] flex justify-center shrink-0 text-[#444]"><Ico size={16}><path d="M3 5h14M10 5v16M7 10l3-3 3 3" /><circle cx="19" cy="5" r="1.5" /></Ico></div>
      <div className="w-[36px] flex justify-center shrink-0 text-[#444]"><Ico size={16}><circle cx="5" cy="12" r="1.5" /><path d="M7 12h14" /></Ico></div>
      <div className="w-[26px] flex justify-center shrink-0 text-[#444]"><Ico size={16}><circle cx="4" cy="14" r="1.5" /><circle cx="19" cy="5" r="1.5" /><path d="M5.5 13L17.5 6M3 21h18" /></Ico></div>
      <div className="w-[38px] flex justify-center shrink-0 text-[#444]"><Ico size={16}><path d="M6 3l10 10h-5l2 6-2 1-3-6-2 3z" /></Ico></div>
      <div className="w-[32px] flex justify-center shrink-0 text-[#444]"><Ico size={16}><path d="M5 3l12 14M12 3l-8 12M21 8L12 21" /></Ico></div>
      <span className="ml-auto mr-[5px] leading-[13px] text-[12px] text-[#444]">16:02:19 UTC-4</span>
    </div>
  )
}

export default function App() {
  return (
    <div className="relative w-[1280px] h-[720px] overflow-hidden bg-white flex flex-col [font-family:Inter,sans-serif]">
      <div className="h-[3px] flex shrink-0">
        <div className="w-[516px] bg-[#e6e6e6] rounded-br-[3px]" />
        <div className="w-[154px]" />
        <div className="flex-1 bg-[#e6e6e6] rounded-bl-[3px]" />
      </div>
      <div className="h-[34px] shrink-0">
        <TopBar />
      </div>
      <div className="h-[4px] bg-[#eeeeee] shrink-0" />
      <div className="flex-1 flex min-h-0">
        <LeftBar />
        <div className="w-[1191px] shrink-0 flex flex-col">
          <div className="flex h-[636px] shrink-0">
            <div className="relative w-[1134px] h-[636px] shrink-0">
              <ChartSvg />
              <Legend />
            </div>
            <PriceAxis />
          </div>
          <TimeAxis />
          <BottomBar />
        </div>
        <RightBar />
      </div>
    </div>
  )
}
